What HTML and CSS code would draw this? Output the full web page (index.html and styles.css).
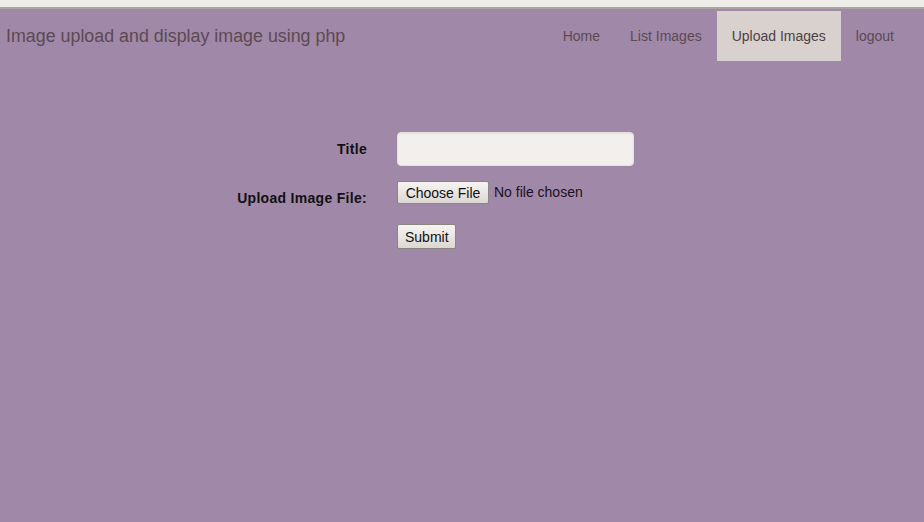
FILE: index.html
```html
<!DOCTYPE html>
<html lang="en">
<head>
    <meta charset="UTF-8">
    <title>Upload Images</title>
    <link rel="stylesheet" href="styles.css">
</head>
<body>
    <div class="browser-strip"></div>

    <nav class="navbar">
        <a class="brand" href="#">Image upload and display image using php</a>
        <ul class="nav">
            <li><a href="#">Home</a></li>
            <li><a href="#">List Images</a></li>
            <li class="active"><a href="#">Upload Images</a></li>
            <li><a href="#">logout</a></li>
        </ul>
    </nav>

    <!-- upload form -->
    <form class="upload-form">
        <label class="form-label" for="title">Title</label>
        <div class="form-control-wrap">
            <input type="text" id="title" class="text-field">
        </div>

        <label class="form-label" for="image">Upload Image File:</label>
        <div class="form-control-wrap file-row">
            <button type="button" class="btn file-btn">Choose File</button>
            <span class="file-name">No file chosen</span>
        </div>

        <div></div>
        <div class="form-control-wrap">
            <button type="submit" class="btn submit-btn">Submit</button>
        </div>
    </form>
</body>
</html>
```

FILE: styles.css
```css
:root {
    --purple: #a088a8;
    --nav-text: #5c4a52;
    --active-bg: #d9d1cd;
}

body {
    margin: 0;
    font-family: "Liberation Sans", Arial, sans-serif;
    font-size: 14px;
    background: var(--purple);
    min-height: 100vh;
}

/* browser chrome remnant at the top */
.browser-strip {
    height: 7px;
    background: #efede9;
    border-bottom: 2px solid #aca59f;
}

/* navbar */
.navbar {
    display: flex;
    justify-content: space-between;
    align-items: flex-start;
    padding: 2px 15px 0 6px;
    height: 50px;
}

.brand {
    font-size: 17.85px;
    line-height: 20px;
    color: var(--nav-text);
    text-decoration: none;
    padding-top: 15px;
}

.nav {
    display: flex;
    list-style: none;
    margin: 0;
    padding: 0;
}

.nav a {
    display: block;
    padding: 15px 15px;
    line-height: 20px;
    color: var(--nav-text);
    text-decoration: none;
}

.nav .active a {
    background: var(--active-bg);
    color: #4e3f44;
}

/* form */
.upload-form {
    display: grid;
    grid-template-columns: 367px 237px;
    column-gap: 30px;
    margin-top: 71px;
}

.form-label {
    text-align: right;
    font-weight: bold;
    color: #111;
    padding-top: 7px;
    line-height: 20px;
    letter-spacing: 0.3px;
}

.form-control-wrap {
    margin-bottom: 15px;
}

.text-field {
    display: block;
    box-sizing: border-box;
    width: 237px;
    height: 34px;
    border: 1px solid #e6e0de;
    border-radius: 4px;
    background: #f2efed;
    box-shadow: inset 0 1px 1px rgba(0, 0, 0, 0.06);
}

.file-row {
    display: flex;
    align-items: flex-start;
    gap: 5px;
    height: 28px;
}

.btn {
    font-family: "Liberation Sans", Arial, sans-serif;
    font-size: 14px;
    color: #111;
    background: linear-gradient(#f6f4f2, #ddd7d3);
    border: 1px solid #8c8680;
    border-radius: 2px;
    padding: 0 7px;
    cursor: pointer;
}

.file-btn {
    height: 23px;
    width: 92px;
}

.file-name {
    line-height: 23px;
    color: #1c1020;
}

.submit-btn {
    height: 25px;
    width: 59px;
}
```
